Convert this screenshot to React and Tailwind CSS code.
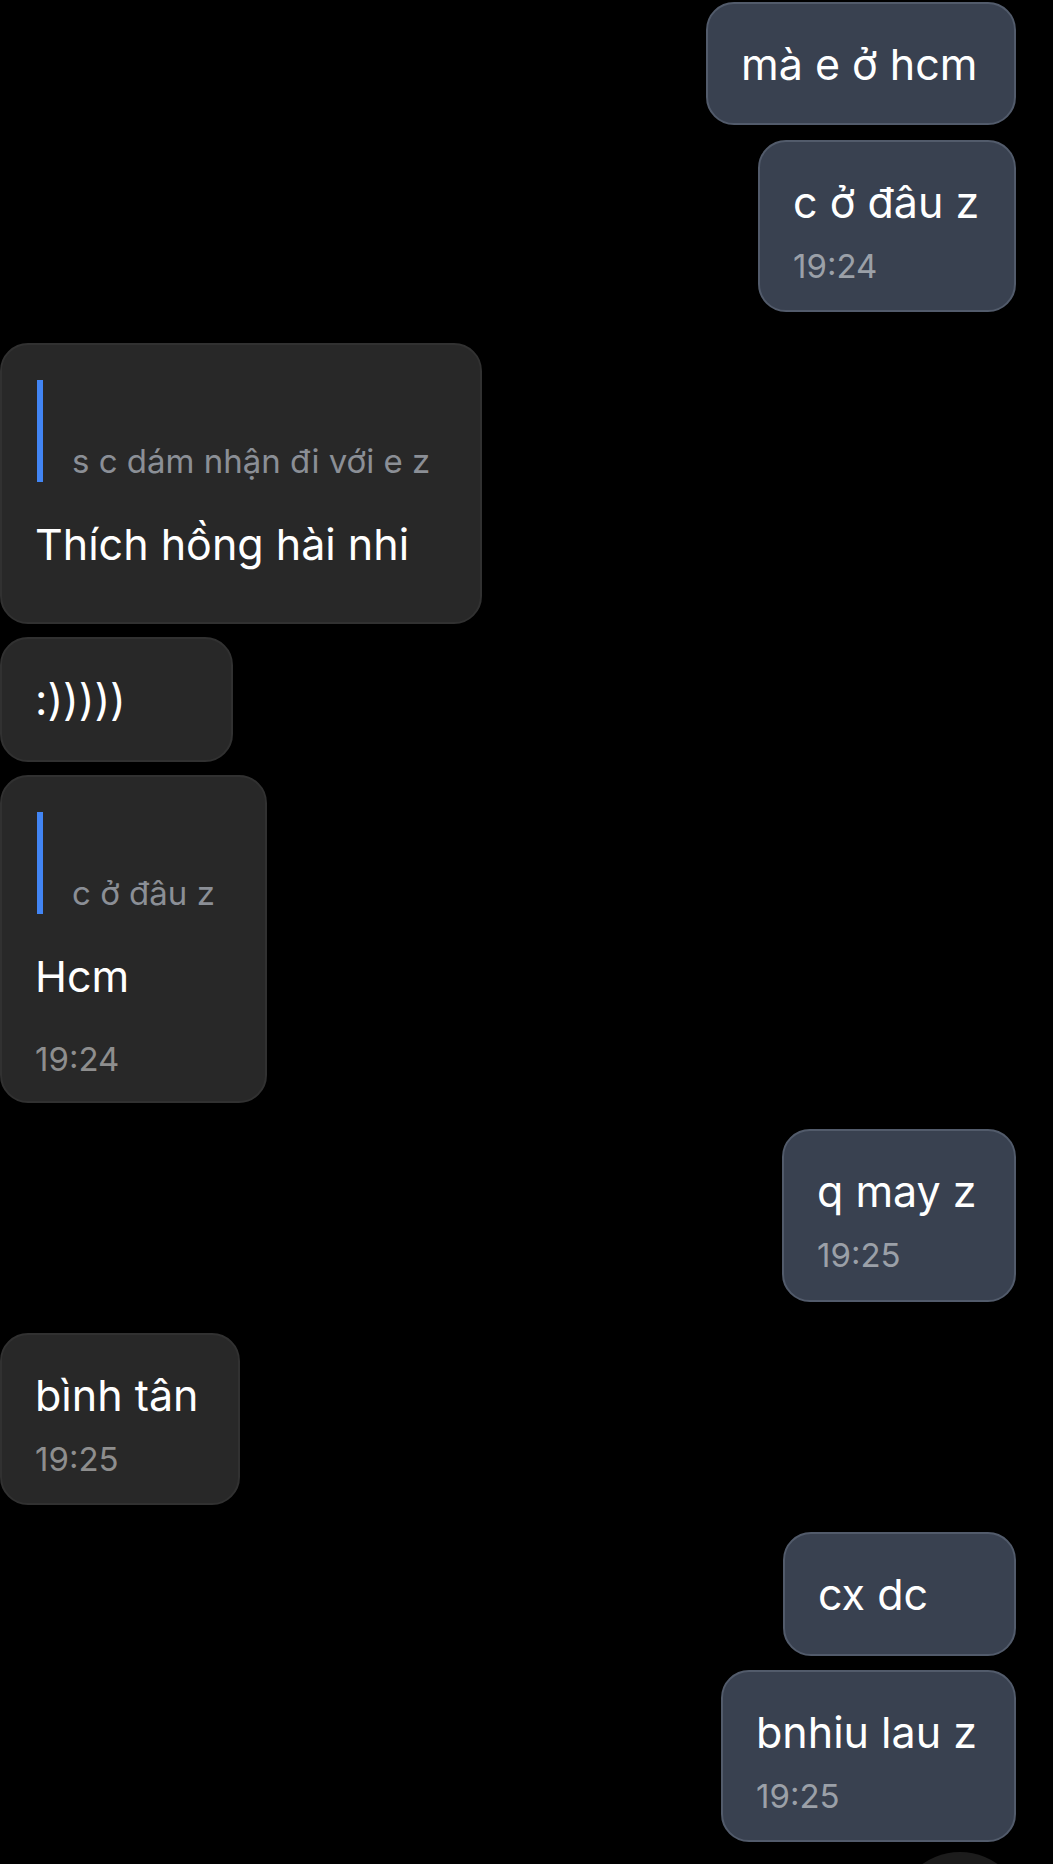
import React from 'react'

const FONT = { fontFamily: 'Inter, "Noto Sans", sans-serif' }

// bubbles in order, top to bottom
const MESSAGES = [
  { id: 1, me: true, w: 'w-[310px]', h: 'h-[123px]', mt: 'mt-[2px]', text: 'mà e ở hcm' },
  { id: 2, me: true, w: 'w-[258px]', h: 'h-[172px]', mt: 'mt-[15px]', text: 'c ở đâu z', time: '19:24' },
  { id: 3, me: false, w: 'w-[482px]', h: 'h-[281px]', mt: 'mt-[31px]', text: 'Thích hồng hài nhi', quote: 's c dám nhận đi với e z' },
  { id: 4, me: false, w: 'w-[233px]', h: 'h-[125px]', mt: 'mt-[13px]', text: ':)))))' },
  { id: 5, me: false, w: 'w-[267px]', h: 'h-[328px]', mt: 'mt-[13px]', text: 'Hcm', quote: 'c ở đâu z', time: '19:24' },
  { id: 6, me: true, w: 'w-[234px]', h: 'h-[173px]', mt: 'mt-[26px]', text: 'q may z', time: '19:25' },
  { id: 7, me: false, w: 'w-[240px]', h: 'h-[172px]', mt: 'mt-[31px]', text: 'bình tân', time: '19:25' },
  { id: 8, me: true, w: 'w-[233px]', h: 'h-[124px]', mt: 'mt-[27px]', text: 'cx dc' },
  { id: 9, me: true, w: 'w-[295px]', h: 'h-[172px]', mt: 'mt-[14px]', text: 'bnhiu lau z', time: '19:25' },
]

function Quote({ text }) {
  return (
    <div className="flex h-[102px] items-end gap-[29px]">
      <div className="ml-[2px] h-full w-[6px] shrink-0 bg-[#4285f4]" />
      <div className="pb-[1px] text-[33px] leading-[40px] text-[#8b8f96] whitespace-nowrap">{text}</div>
    </div>
  )
}

function Bubble({ m }) {
  const tone = m.me
    ? 'self-end mr-[37px] bg-[#394150] border-[#525b6b]'
    : 'self-start bg-[#282828] border-[#313131]'
  return (
    <div className={`${m.mt} ${m.w} ${m.h} ${tone} shrink-0 rounded-[28px] border-2 pl-[33px] pt-[35px] flex flex-col`}>
      {m.quote && <Quote text={m.quote} />}
      <div className={`${m.quote ? 'mt-[37px]' : ''} text-[43px] leading-[50px] text-white whitespace-nowrap`}>
        {m.text}
      </div>
      {m.time && (
        <div className={`${m.quote ? 'mt-[38px]' : 'mt-[19px]'} text-[33px] leading-[40px] whitespace-nowrap ${m.me ? 'text-[#9ba0a8]' : 'text-[#8e8e8e]'}`}>
          {m.time}
        </div>
      )}
    </div>
  )
}

export default function App() {
  return (
    <div className="relative w-[1053px] h-[1864px] overflow-hidden bg-black" style={FONT}>
      <div className="flex flex-col">
        {MESSAGES.map((m) => (
          <Bubble key={m.id} m={m} />
        ))}
      </div>
      {/* scroll-down button peeking from the bottom */}
      <div className="absolute left-[895px] top-[1852px] h-[130px] w-[130px] rounded-full bg-[#1c1c1c]" />
    </div>
  )
}
